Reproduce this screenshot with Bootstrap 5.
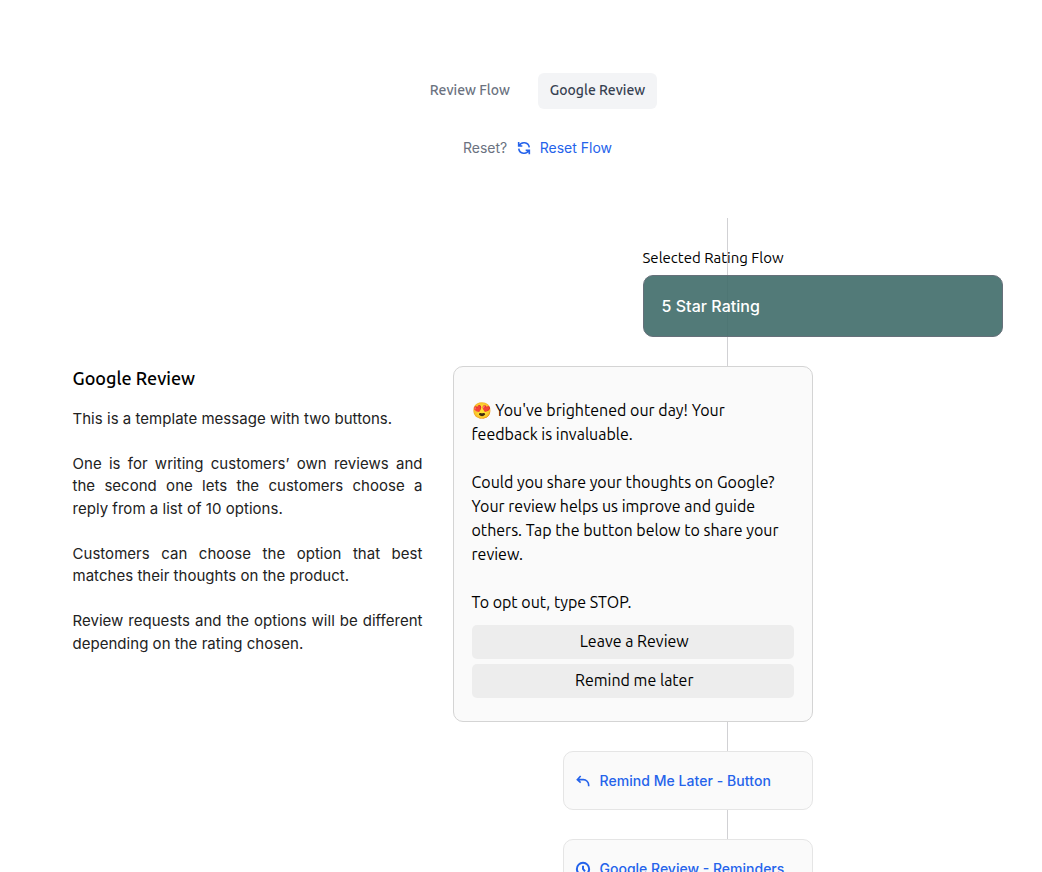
<!DOCTYPE html>
<html lang="en">
<head>
<meta charset="utf-8">
<meta name="viewport" content="width=device-width, initial-scale=1">
<title>Review Flow</title>
<link href="https://cdn.jsdelivr.net/npm/bootstrap@5.3.0/dist/css/bootstrap.min.css" rel="stylesheet">
<script src="https://cdn.jsdelivr.net/npm/bootstrap@5.3.0/dist/js/bootstrap.bundle.min.js" defer></script>
<style>
:root{--ui:Ubuntu,"Noto Sans",sans-serif;--blue:#2563eb}
body{font-family:var(--ui);color:#000;background:#fff;height:872px;overflow:hidden}
.page{width:930px;margin-left:72.5px;padding-top:73px}
.flow-tabs{gap:16px;height:36px}
.flow-tabs .nav-link{height:36px;padding:0 12px;line-height:34px;font-size:14px;font-weight:500;color:#6b7280;border-radius:6px;white-space:nowrap}
.flow-tabs .nav-link.active{background:#f3f4f6;color:#374151}
.inter{font-family:Inter,sans-serif}
.reset{margin-top:28px;height:22px;line-height:22px;font-size:14px;color:#6b7280}
.reset a,.step{color:var(--blue);text-decoration:none}
.reset a{margin-left:9px;gap:7.500px}
.flow{margin-top:59px;gap:30px}
.about{width:350px;padding-top:147px;font-size:15px;line-height:22.5px;color:#222;text-align:justify;letter-spacing:.03px}
.about h1{font-family:var(--ui);font-size:18px;line-height:26px;font-weight:500;color:#000;margin:0 0 16.8px;letter-spacing:0}
.about p{margin:0 0 22.5px}
.track{width:550px;height:700px}
.track::before{content:"";position:absolute;left:274px;top:0;width:1px;height:690px;background:#d1d1d4}
.track>*{position:relative}
.picked{width:360px;padding-top:29px}
.picked label{display:block;font-size:15px;line-height:22px}
.rating{margin-top:6px;height:62px;border-radius:10px;border:1px solid #66707a;background:rgba(63,108,105,.9);color:#fff;font-size:16px;font-weight:500;letter-spacing:.04px;padding:0 18px}
.message{width:360px;height:356px;margin-top:29px;padding:31px 18px 0;border:1px solid #d4d4d4;border-radius:10px;background:#fafafa;font-size:16px;line-height:24px;white-space:nowrap}
.message p{margin:0 0 24px}
.message p.last{margin-bottom:11px}
.choice{height:34px;line-height:32px;border-radius:5px;background:#ededed;text-align:center;margin-bottom:5px;padding-left:3.500px}
.step{width:250px;height:59px;margin:29px 0 0 110px;border:1px solid #e5e5e5;border-radius:10px;background:#fafafa;font-size:14px;font-weight:500;padding:0 11.5px;gap:8.500px;white-space:nowrap}
.step-later{letter-spacing:.05px}
svg{fill:none;stroke:currentColor;stroke-width:2.4;flex:none}
</style>
</head>
<body>
<main class="page">
<nav class="nav flow-tabs justify-content-center"><a class="nav-link" href="#">Review Flow</a><a class="nav-link active" href="#">Google Review</a></nav>
<div class="reset inter d-flex justify-content-center align-items-center"><span>Reset?</span><a href="#" class="d-flex align-items-center"><svg width="16" height="16" viewBox="0 0 24 24"><path d="M4 3v6h5.500M4.600 9A8 8 0 0 1 19.900 11M20 21.500v-6h-5.500M19.400 15A8 8 0 0 1 4.100 13"/></svg><span>Reset Flow</span></a></div>
<section class="flow d-flex">
<div class="about inter"><h1>Google Review</h1>
<p>This is a template message with two buttons.</p>
<p>One is for writing customers’ own reviews and the second one lets the customers choose a reply from a list of 10 options.</p>
<p>Customers can choose the option that best matches their thoughts on the product.</p>
<p>Review requests and the options will be different depending on the rating chosen.</p></div>
<div class="track position-relative">
<div class="picked ms-auto"><label>Selected Rating Flow</label><div class="rating inter d-flex align-items-center">5 Star Rating</div></div>
<div class="message"><p>😍 You've brightened our day! Your<br>feedback is invaluable.</p>
<p>Could you share your thoughts on Google?<br>Your review helps us improve and guide<br>others. Tap the button below to share your<br>review.</p>
<p class="last">To opt out, type STOP.</p>
<div class="choice">Leave a Review</div><div class="choice">Remind me later</div></div>
<a href="#" class="step step-later inter d-flex align-items-center"><svg width="16" height="16" viewBox="0 0 24 24"><path d="M3.500 10h9a8 8 0 0 1 8 8v2M8.500 4.500 3.500 10l5 4.500"/></svg><span>Remind Me Later - Button</span></a>
<a href="#" class="step inter d-flex align-items-center"><svg width="16" height="16" viewBox="0 0 24 24" stroke-width="3"><circle cx="12" cy="12" r="9.200" style="stroke-width:3"/><path d="M12 7v5l3 3.500" style="stroke-width:3"/></svg><span>Google Review - Reminders</span></a>
</div>
</section>
</main>
</body>
</html>
